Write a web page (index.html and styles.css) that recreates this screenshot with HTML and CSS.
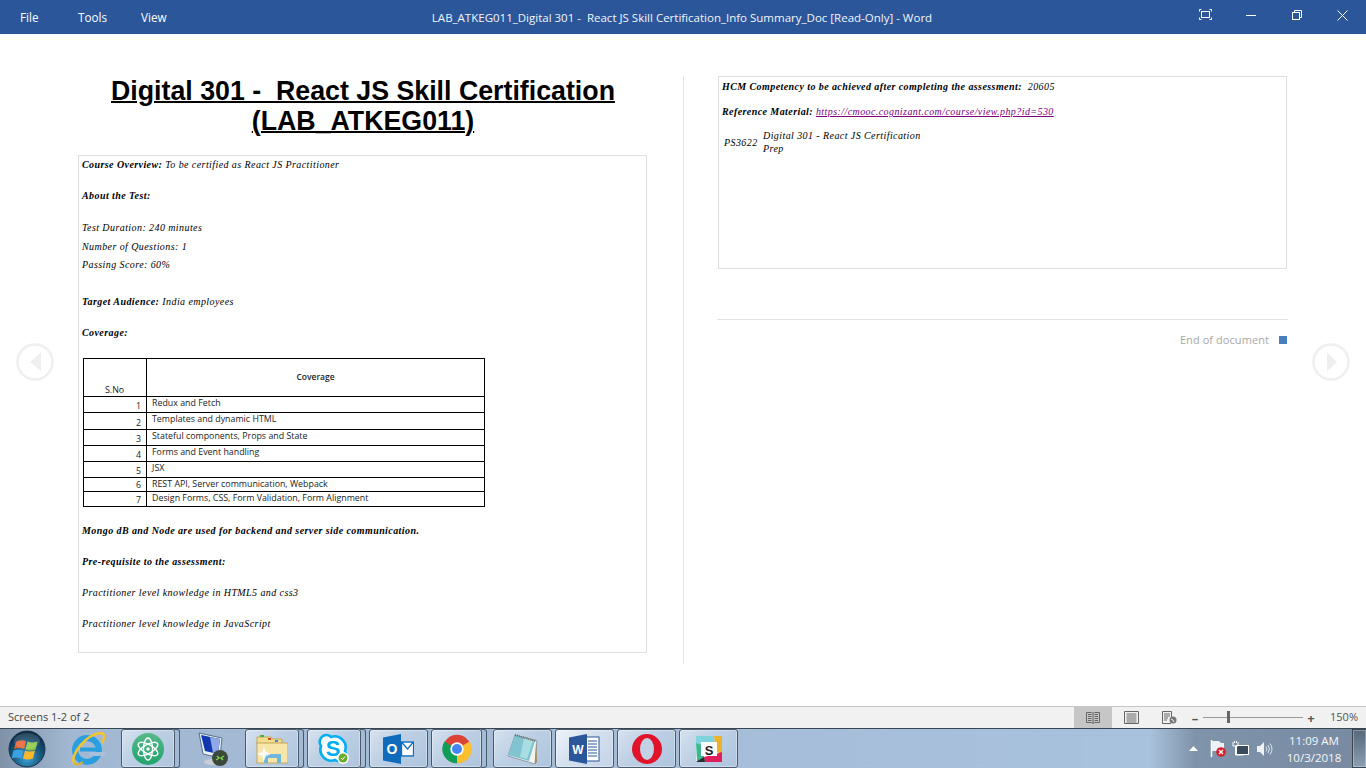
FILE: index.html
```html
<!DOCTYPE html>
<html lang="en">
<head>
<meta charset="utf-8">
<title>LAB_ATKEG011 - Word</title>
<link rel="stylesheet" href="styles.css">
</head>
<body>
<header class="titlebar">
  <nav class="menu"><span class="m-file">File</span><span class="m-tools">Tools</span><span class="m-view">View</span></nav>
  <div class="doc-title">LAB_ATKEG011_Digital 301 -&nbsp; React JS Skill Certification_Info Summary_Doc [Read-Only] - Word</div>
  <div class="winctl">
    <svg class="wi" width="13" height="11" viewBox="0 0 13 11"><path d="M.5 2.500v-2h2M10.500.5h2v2M12.500 8.500v2h-2M2.500 10.500h-2v-2" fill="none" stroke="#fff"/><rect x="2.500" y="2.500" width="8" height="6" fill="none" stroke="#fff"/></svg>
    <svg class="wi" width="10" height="2" viewBox="0 0 10 2"><rect width="10" height="1" y="0" fill="#fff"/></svg>
    <svg class="wi" width="10" height="10" viewBox="0 0 10 10"><rect x=".5" y="2.500" width="7" height="7" fill="none" stroke="#fff"/><path d="M2.500 2.500v-2h7v7h-2" fill="none" stroke="#fff"/></svg>
    <svg class="wi" width="11" height="11" viewBox="0 0 11 11"><path d="M.5.500l10 10M10.500.500l-10 10" fill="none" stroke="#fff"/></svg>
  </div>
</header>

<main class="reader">
  <section class="col">
    <h1 class="doc-h">Digital 301 -&nbsp; React JS Skill Certification<br>(LAB_ATKEG011)</h1>
    <div class="box box-left">
      <p class="para"><b>Course Overview:</b> To be certified as React JS Practitioner</p>
      <p class="para wide"><b>About the Test:</b></p>
      <p class="line">Test Duration: 240 minutes</p>
      <p class="line">Number of Questions: 1</p>
      <p class="para gap">Passing Score: 60%</p>
      <p class="para"><b>Target Audience:</b> India employees</p>
      <p class="para tight"><b>Coverage:</b></p>
      <table class="cov">
        <tr class="rh"><td class="no">S.No</td><th>Coverage</th></tr>
        <tr class="r16"><td class="num">1</td><td class="txt">Redux and Fetch</td></tr>
        <tr class="r17"><td class="num">2</td><td class="txt">Templates and dynamic HTML</td></tr>
        <tr class="r16"><td class="num">3</td><td class="txt">Stateful components, Props and State</td></tr>
        <tr class="r16"><td class="num">4</td><td class="txt">Forms and Event handling</td></tr>
        <tr class="r16"><td class="num">5</td><td class="txt">JSX</td></tr>
        <tr class="r14"><td class="num">6</td><td class="txt">REST API, Server communication, Webpack</td></tr>
        <tr class="r15"><td class="num">7</td><td class="txt">Design Forms, CSS, Form Validation, Form Alignment</td></tr>
      </table>
      <p class="para after"><b>Mongo dB and Node are used for backend and server side communication.</b></p>
      <p class="para"><b>Pre-requisite to the assessment:</b></p>
      <p class="para">Practitioner level knowledge in HTML5 and css3</p>
      <p class="para">Practitioner level knowledge in JavaScript</p>
    </div>
  </section>
  <div class="divider"></div>
  <section class="col">
    <div class="box box-right">
      <p class="rline"><b>HCM Competency to be achieved after completing the assessment:</b>&nbsp; 20605</p>
      <p class="rline"><b>Reference Material:</b> <a class="link" href="#">https://cmooc.cognizant.com/course/view.php?id=530</a></p>
      <div class="ps"><span class="ps-id">PS3622</span><span class="ps-name">Digital 301 - React JS Certification<br>Prep</span></div>
    </div>
    <div class="end"><span>End of document</span><i class="end-mark"></i></div>
  </section>
  <div class="arrow arrow-l"><svg width="38" height="38" viewBox="0 0 38 38"><circle cx="19" cy="19" r="17.500" fill="#fff" stroke="#efefef" stroke-width="2.500"/><path d="M25 9.500v19L14 19z" fill="#efefef"/></svg></div>
  <div class="arrow arrow-r"><svg width="38" height="38" viewBox="0 0 38 38"><circle cx="19" cy="19" r="17.500" fill="#fff" stroke="#efefef" stroke-width="2.500"/><path d="M15 9.500v19L25 19z" fill="#efefef"/></svg></div>
</main>

<footer class="status">
  <span class="screens">Screens 1-2 of 2</span>
  <div class="st-right">
    <div class="vb on"><svg width="14" height="13" viewBox="0 0 14 13"><path d="M.5 1.500h5l1.500 1 1.500-1h5v10h-5l-1.500 1-1.500-1h-5zM7 2.500v9.500M2 3.500h3.500M2 5.500h3.500M2 7.500h3.500M2 9.500h3.500M8.500 3.500H12M8.500 5.500H12M8.500 7.500H12M8.500 9.500H12" fill="none" stroke="#666"/></svg></div>
    <div class="vb"><svg width="15" height="13" viewBox="0 0 15 13"><path d="M.5.500h14v12H.5zM2.500 3h10M2.500 5h10M2.500 7h10M2.500 9h10M2.500 11h10" fill="none" stroke="#666"/></svg></div>
    <div class="vb"><svg width="15" height="13" viewBox="0 0 15 13"><path d="M9 12.500H.5V.500h9v6M2 3h6M2 5h6M2 7h4M2 9h3" fill="none" stroke="#666"/><circle cx="11" cy="9" r="3.500" fill="#777"/><path d="M9 8l2 1 1 2" stroke="#eee" fill="none"/></svg></div>
    <div class="zoom">
      <span class="zm">–</span>
      <div class="track"><i class="thumb"></i></div>
      <span class="zp">+</span>
    </div>
    <span class="pct">150%</span>
  </div>
</footer>

<footer class="taskbar">
  <div class="tb-left">
    <div class="plain orb">
      <svg width="38" height="38" viewBox="0 0 38 38"><defs><radialGradient id="og" cx=".5" cy=".75" r=".7"><stop offset="0" stop-color="#3fa6d8"/><stop offset=".55" stop-color="#17577f"/><stop offset="1" stop-color="#0a2a44"/></radialGradient></defs><circle cx="19" cy="19" r="18" fill="url(#og)" stroke="#20354a"/><path d="M8 12q4-3 10-1l-2 8q-5-2-10 0z" fill="#e8602c"/><path d="M19.500 11.500q5 2 10 0l-2 8q-5 2-10 0z" fill="#8cc63f"/><path d="M5.500 20.500q5-2 10 0l-2 8q-5-2-10 0z" fill="#3aa0e0"/><path d="M17 20.500q5 2 10 0l-2 8q-5 2-10 0z" fill="#f5b82e"/><ellipse cx="19" cy="11" rx="13" ry="8" fill="#fff" opacity=".14"/></svg>
    </div>
    <div class="plain ie">
      <svg width="34" height="36" viewBox="0 0 34 36"><circle cx="16" cy="19" r="12" fill="none" stroke="#2a9fe0" stroke-width="6"/><rect x="9" y="16.500" width="20" height="4" fill="#2a9fe0"/><rect x="18" y="21" width="16" height="4" fill="#a9c0da"/><path d="M3 32C-1 24 15 3 30 2c4 0 4 5 1 10" fill="none" stroke="#f4c42c" stroke-width="2.500"/><path d="M3 32c2 3 6 1 9-1" fill="none" stroke="#e5b020" stroke-width="2"/></svg>
    </div>
    <div class="btn w54 stub">
      <svg width="32" height="32" viewBox="0 0 32 32"><defs><linearGradient id="ag" x1="0" y1="0" x2="0" y2="1"><stop offset="0" stop-color="#58b98a"/><stop offset="1" stop-color="#1fa36e"/></linearGradient></defs><circle cx="16" cy="16" r="16" fill="url(#ag)"/><g fill="none" stroke="#fff" stroke-width="1.400"><ellipse cx="16" cy="16" rx="11" ry="4.500" transform="rotate(30 16 16)"/><ellipse cx="16" cy="16" rx="11" ry="4.500" transform="rotate(-30 16 16)"/><ellipse cx="16" cy="16" rx="11" ry="4.500" transform="rotate(90 16 16)"/></g><circle cx="16" cy="16" r="1.800" fill="#fff"/></svg>
    </div>
    <div class="plain rdp">
      <svg width="36" height="36" viewBox="0 0 36 36"><path d="M3 2l23 5-2 20-17-4z" fill="#e8eef5" stroke="#56708c"/><path d="M5 4l19 4-2 15-13-3z" fill="#1238b0"/><path d="M14 6l10 2-2 15-5-1z" fill="#8fa8e8"/><ellipse cx="16" cy="31" rx="8" ry="3" fill="#c8ced6"/><circle cx="24" cy="27" r="8" fill="#3a4a3a"/><path d="M20 29l3-2-2-2M28 25l-3 2 2 2" fill="none" stroke="#7ed04a" stroke-width="1.500"/></svg>
    </div>
    <div class="btn w54 stub">
      <svg width="32" height="30" viewBox="0 0 32 30"><path d="M1 3h14l2 2h9v5H1z" fill="#f3dc8e" stroke="#c4a65a"/><rect x="4" y="1" width="4" height="2" fill="#4cae3c"/><rect x="12" y="4" width="3" height="2" fill="#d8472b"/><rect x="19" y="6" width="3" height="2" fill="#3c8ed0"/><rect x="1" y="9" width="31" height="20" fill="#f8e6a8" stroke="#c4a65a"/><rect x="8" y="20" width="17" height="4" fill="#6fb6dc"/><path d="M8 24h4v5H8zM21 24h4v5h-4z" fill="#6fb6dc"/><path d="M6 18l2-5 2 5 5 2-5 2-2 5-2-5-5-2z" fill="#fff" opacity=".85"/></svg>
    </div>
    <div class="btn w54 stub">
      <svg width="32" height="32" viewBox="0 0 32 32"><path d="M9 2a7 7 0 0 0-6 11 11 11 0 0 0 14 14 7 7 0 0 0 10-9A11 11 0 0 0 13 4 7 7 0 0 0 9 2z" fill="#fff" stroke="#00aff0" stroke-width="2.600"/><text class="sk" x="15" y="23">S</text><circle cx="25" cy="25" r="6" fill="#fff"/><circle cx="25" cy="25" r="4.500" fill="#6cab2e"/><path d="M23 25l1.500 1.500 2.500-3" stroke="#fff" fill="none"/></svg>
    </div>
    <div class="btn w59 stub2">
      <svg width="31" height="30" viewBox="0 0 31 30"><path d="M0 3.500L18 0v30L0 26.500z" fill="#0f6cbd"/><rect x="18" y="7" width="13" height="16" fill="#fff"/><path d="M18.500 8v14h12V8zM18.500 8l6 7 6-7" fill="none" stroke="#0f6cbd" stroke-width="1.300"/><text class="ol" x="9" y="20">O</text></svg>
    </div>
    <div class="btn w51 stub3">
      <svg width="30" height="30" viewBox="0 0 36 36"><circle cx="18" cy="18" r="17" fill="#db4437"/><path d="M18 18L33 9a17 17 0 0 1-15 26z" fill="#fbc02d"/><path d="M18 18L18 35A17 17 0 0 1 3 9z" fill="#0f9d58"/><circle cx="18" cy="18" r="8" fill="#fff"/><circle cx="18" cy="18" r="6" fill="#4285f4"/></svg>
    </div>
    <div class="btn w59">
      <svg width="32" height="30" viewBox="0 0 32 30"><path d="M8 1l22 6-2 23L1 22z" fill="#f3f3ee" stroke="#8a9aa8"/><path d="M8 1l20 6-6 20L1 21z" fill="#7fc4d0"/><path d="M17 4l9 3-6 18-7-2z" fill="#a8dde2"/><path d="M8 1l21 6" stroke="#6a6a6a" stroke-width="2" stroke-dasharray="1 1"/><path d="M29 7l1 21-2 2z" fill="#a88a50"/></svg>
    </div>
    <div class="btn w59 active">
      <svg width="31" height="30" viewBox="0 0 31 30"><rect x="16" y="3" width="14" height="24" fill="#fff" stroke="#2b579a"/><path d="M19 7h9M19 10h9M19 13h9M19 16h9M19 19h9M19 22h9" stroke="#2b579a"/><path d="M0 3.500L18 0v30L0 26.500z" fill="#2b579a"/><text class="wd" x="9" y="20">W</text></svg>
    </div>
    <div class="btn w59">
      <svg width="30" height="30" viewBox="0 0 30 30"><circle cx="15" cy="15" r="15" fill="#e0132b"/><ellipse cx="15" cy="15" rx="7" ry="11" fill="#c2d1e3"/></svg>
    </div>
    <div class="btn w59">
      <svg width="26" height="26" viewBox="0 0 26 26"><rect width="26" height="26" rx="2" fill="#fff"/><path d="M0 0h18l1 6-13 4-6-3z" fill="#7fd3dc"/><path d="M18 0h8v18l-6-2z" fill="#ecb22e"/><path d="M0 7l6 2 3 17H1z" fill="#3eb890"/><path d="M9 26l-1-5 12-3 6-2v10z" fill="#e01e5a"/><path d="M0 26l8-5 1 5z" fill="#2c2d30"/><rect x="5" y="6" width="16" height="14" fill="#fff"/><text class="sl" x="13" y="19">S</text></svg>
    </div>
  </div>
  <div class="tray">
    <svg class="t-up" width="9" height="5" viewBox="0 0 9 5"><path d="M4.500 0L9 5H0z" fill="#fff"/></svg>
    <svg width="16" height="17" viewBox="0 0 16 17"><path d="M1.500 0v17" stroke="#fff" stroke-width="1.500"/><path d="M2 1h7l2 2h3v8H2z" fill="#eef2f6"/><circle cx="11" cy="12" r="4.800" fill="#d2232a"/><path d="M9 10l4 4M13 10l-4 4" stroke="#fff" stroke-width="1.300"/></svg>
    <svg class="t-net" width="17" height="16" viewBox="0 0 17 16"><rect x="4.500" y="4.500" width="12" height="9" fill="#3b4a5c" stroke="#fff"/><path d="M1 1v4h5V1M3.500 5v9h8M2.500 0v2M4.500 0v2" fill="none" stroke="#fff"/></svg>
    <svg width="16" height="14" viewBox="0 0 16 14"><path d="M0 4h3l4-4v14l-4-4H0z" fill="#eef2f6"/><path d="M9 4.500q2 2.500 0 5M11 3q3 4 0 8M13 1.500q4 5.500 0 11" fill="none" stroke="#dfe7ef"/></svg>
    <div class="clock"><div>11:09 AM</div><div>10/3/2018</div></div>
    <div class="show-desk"></div>
  </div>
</footer>
</body>
</html>
```
FILE: styles.css
```css
* { box-sizing: border-box; }
html, body { margin: 0; padding: 0; }
body { width: 1366px; height: 768px; overflow: hidden; display: flex; flex-direction: column; background: #fff; font-family: "Open Sans", "Liberation Sans", sans-serif; }

.titlebar { height: 34px; flex: none; background: #2b579a; color: #fff; display: flex; align-items: center; position: relative; font-size: 11.700px; }
.menu { display: flex; padding-left: 20px; }
.m-file { width: 58px; }
.m-tools { width: 63px; }
.doc-title { position: absolute; left: 0; right: 0; text-align: center; top: 10px; line-height: 16px; font-size: 11.500px; padding-right: 2px; color: #f2f5fa; }
.winctl { position: absolute; right: 0; top: 0; height: 34px; width: 174px; }
.wi { position: absolute; }
.wi:nth-child(1) { left: 7px; top: 9px; }
.wi:nth-child(2) { left: 54px; top: 15px; }
.wi:nth-child(3) { left: 100px; top: 10px; }
.wi:nth-child(4) { left: 145px; top: 10px; }

.reader { flex: 1; display: flex; align-items: flex-start; padding: 42px 0 0 78px; position: relative; height: 672px; }
.col { width: 569px; flex: none; }
.divider { width: 1px; height: 588px; background: #e3e3e3; margin: 0 34px 0 36px; flex: none; }
.doc-h { margin: 0 0 19px; font: bold 26.750px/30px "Liberation Sans", sans-serif; text-align: center; text-decoration: underline; text-decoration-thickness: 2px; color: #000; padding-left: 1px; }
.box { border: 1px solid #dedede; font: italic 10px/18px "Liberation Serif", serif; color: #000; letter-spacing: .42px; }
.box-left { height: 498px; padding: 0 3px; }
.box-right { height: 193px; padding: 1px 3px; }
.box p { margin: 0; }
.para { margin-bottom: 13px !important; }
.wide { margin-bottom: 14px !important; }
.line { margin-bottom: .5px !important; }
.gap { margin-bottom: 19px !important; }
.tight { margin-bottom: 16px !important; }
.after { margin-top: 15px !important; }

.cov { border-collapse: collapse; table-layout: fixed; width: 402px; margin-left: 1px; font: 8.850px/11px "Open Sans", sans-serif; letter-spacing: 0; color: #222; }
.cov td, .cov th { border: 1px solid #000; padding: 0 5px; font-style: normal; }
.cov td:first-child { width: 63px; }
.cov th { font-weight: 600; font-size: 8.500px; vertical-align: middle; padding-bottom: 2px; }
.cov .no { text-align: left; padding: 0 0 0 21px; vertical-align: bottom; }
.cov .num { text-align: right; vertical-align: bottom; padding: 0 5px 0 0; }
.cov .txt { vertical-align: top; padding: 1px 5px 0; }
.rh { height: 38px; }
.r16 { height: 16px; }
.r17 { height: 17px; }
.r14 { height: 14px; }
.r15 { height: 15px; }

.rline { margin-bottom: 7px !important; line-height: 18px; }
.link { color: #800080; text-decoration: underline; }
.ps { display: flex; margin-top: 8px; line-height: 13px; padding-left: 2px; }
.ps-id { width: 39px; align-self: center; flex: none; }
.end { margin-top: 50px; border-top: 1px solid #e3e3e3; margin-left: -1px; margin-right: -1px; padding: 12px 1px 0 0; display: flex; justify-content: flex-end; align-items: center; font-size: 11px; line-height: 16px; color: #a8a8a8; letter-spacing: .07px; }
.end-mark { width: 8px; height: 8px; background: #4a7ebb; margin-left: 10px; flex: none; }
.arrow { position: absolute; top: 309px; line-height: 0; }
.arrow-l { left: 16px; }
.arrow-r { left: 1312px; }

.status { height: 22px; flex: none; background: #f1f1f1; border-top: 1px solid #c6c6c6; display: flex; align-items: center; justify-content: space-between; font-size: 11px; color: #444; padding-left: 8px; }
.screens { position: relative; top: -1px; }
.st-right { display: flex; align-items: center; height: 100%; padding-right: 8px; }
.vb { width: 38px; height: 21px; display: flex; align-items: center; justify-content: center; }
.vb.on { background: #c6c6c6; }
.zoom { display: flex; align-items: center; margin-left: -1px; color: #555; }
.zm, .zp { width: 16px; text-align: center; font-size: 13px; font-weight: 700; line-height: 16px; }
.track { width: 100px; height: 1px; background: #999; position: relative; }
.thumb { position: absolute; left: 24px; top: -6px; width: 3px; height: 12px; background: #666; }
.pct { margin-left: 11px; font-size: 11px; color: #555; position: relative; top: -1px; }

.taskbar { height: 40px; flex: none; display: flex; justify-content: space-between; border-top: 1px solid #3a4552; background: linear-gradient(90deg, #7f92a8 0, #a2b8d2 70px, #a8c1dc 1150px, #7f93aa 1195px, #778aa1 100%); }
.tb-left { display: flex; align-items: flex-start; padding-left: 8px; }
.plain { display: flex; align-items: center; justify-content: center; height: 39px; }
.orb { width: 38px; }
.ie { width: 34px; margin-left: 25px; margin-right: 16px; }
.rdp { width: 36px; margin-left: 13px; margin-right: 13px; }
.btn { height: 39px; border: 1px solid #4a5a6d; border-radius: 3px; display: flex; align-items: center; justify-content: center; background: linear-gradient(135deg, #d6e2ef 0, #bccfe4 45%, #afc5de 100%); box-shadow: inset 0 0 0 1px rgba(255,255,255,.35); position: relative; margin-right: 3px; flex: none; }
.btn.active { background: linear-gradient(135deg, #eef3f9 0, #d4e0ee 45%, #c4d4e7 100%); }
.w54 { width: 54px; }
.w59 { width: 59px; }
.w51 { width: 51px; }
.stub { margin-right: 8px; }
.stub2 { margin-right: 3px; }
.stub3 { margin-right: 11px; }
.stub::after, .stub3::after { content: ""; position: absolute; top: -1px; bottom: -1px; right: -6px; width: 5px; border: 1px solid #4a5a6d; border-left: 0; border-radius: 0 3px 3px 0; }
.sk { font: bold 22px "Liberation Sans", sans-serif; fill: #00aff0; text-anchor: middle; }
.ol { font: bold 14px "Liberation Sans", sans-serif; fill: #fff; text-anchor: middle; }
.wd { font: bold 12px "Liberation Sans", sans-serif; fill: #fff; text-anchor: middle; }
.sl { font: bold 13px "Liberation Sans", sans-serif; fill: #1d1c1d; text-anchor: middle; }

.tray { display: flex; align-items: center; height: 39px; color: #fff; }
.tray svg { margin-left: 8px; }
.tray .t-up { margin-right: 4.500px; }
.tray .t-net { margin-left: 6px; }
.clock { width: 74px; margin-left: 4px; margin-right: 1px; padding-top: 1px; text-align: center; font-size: 11.500px; line-height: 17px; color: #f4f7fa; }
.show-desk { width: 14px; height: 39px; background: linear-gradient(180deg, #56687c, #8c9eb2); border: 1px solid #3a4552; border-right: 0; box-shadow: inset 0 0 0 1px rgba(255,255,255,.3); }
```
